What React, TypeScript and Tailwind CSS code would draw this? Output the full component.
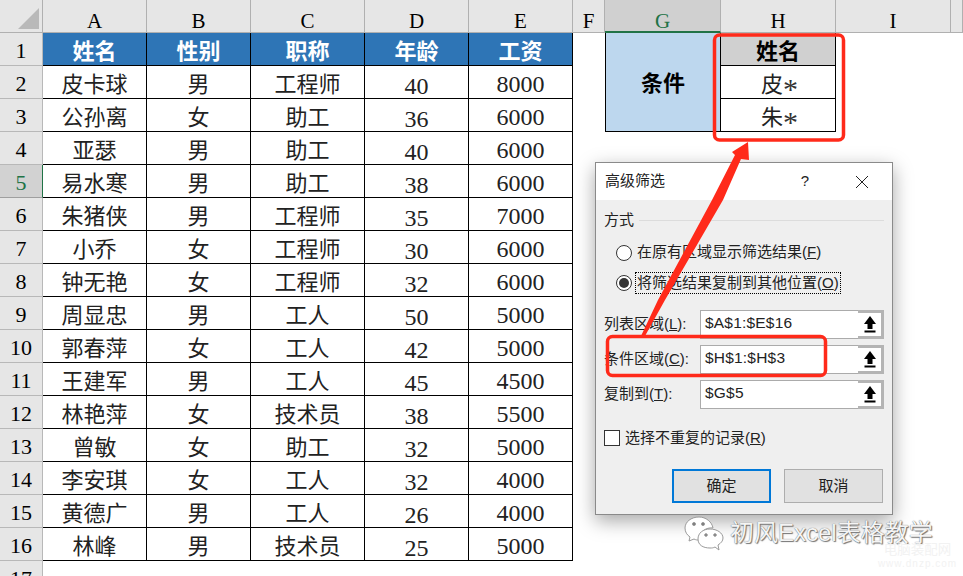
const rows = [
  ["皮卡球", "男", "工程师", "40", "8000"],
  ["公孙离", "女", "助工", "36", "6000"],
  ["亚瑟", "男", "助工", "40", "6000"],
  ["易水寒", "男", "助工", "38", "6000"],
  ["朱猪侠", "男", "工程师", "35", "7000"],
  ["小乔", "女", "工程师", "30", "6000"],
  ["钟无艳", "女", "工程师", "32", "6000"],
  ["周显忠", "男", "工人", "50", "5000"],
  ["郭春萍", "女", "工人", "42", "5000"],
  ["王建军", "男", "工人", "45", "4500"],
  ["林艳萍", "女", "技术员", "38", "5500"],
  ["曾敏", "女", "助工", "32", "5000"],
  ["李安琪", "女", "工人", "32", "4000"],
  ["黄德广", "男", "工人", "26", "4000"],
  ["林峰", "男", "技术员", "25", "5000"],
];

const headers = ["姓名", "性别", "职称", "年龄", "工资"];
const columns = ["A", "B", "C", "D", "E", "F", "G", "H", "I", ""];

const RowHead = ({ n }: { n: number }) => (
  <div
    className={`flex items-center justify-center border-b border-r pt-[3px] text-[22px] ${
      n === 5
        ? "border-b-[#9f9f9f] border-r-[#217346] bg-[#d2d2d2] text-[#217346]"
        : "border-b-[#b8b8b8] border-r-[#b8b8b8] bg-[#e6e6e6] text-black"
    }`}
  >
    {n}
  </div>
);

const Cell = ({ children, pad }: { children: React.ReactNode; pad: string }) => (
  <div className={`flex items-center justify-center border-b border-r border-black bg-white leading-none text-[#222] ${pad}`}>
    {children}
  </div>
);

const Star = () => (
  <span className="inline-block h-[22px] w-[12px] text-center text-[30px] leading-[30px] text-[#333]">*</span>
);

const RefButton = () => (
  <div className="flex w-[26px] items-center justify-center border-[3px] border-l-0 border-[#b4b4b4] bg-white">
    <svg width="14" height="18" viewBox="0 0 14 18">
      <path d="M7 1 L13 9 H9.5 V14 H4.5 V9 H1 Z" fill="#000" />
      <rect x="1.5" y="15.5" width="11" height="2" fill="#000" />
    </svg>
  </div>
);

const RangeField = ({ label, hot, value }: { label: string; hot: string; value: string }) => (
  <div className="flex h-[29px] items-center">
    <div className="w-[96px] text-[15px] text-[#222]">
      {label}(<span className="underline">{hot}</span>):
    </div>
    <div className="flex h-full w-[184px]">
      <div className="flex-1 border border-r-0 border-[#ababab] bg-white pb-1 pl-[4px] text-[15.5px] tracking-[0.2px] text-[#222]">
        {value}
      </div>
      <RefButton />
    </div>
  </div>
);

const FilterDialog = () => (
  <div className="absolute left-[595px] top-[162px] flex h-[353px] w-[298px] flex-col border border-[#8a8a8a] bg-[#efefef] shadow-[0_6px_18px_rgba(0,0,0,0.35)] font-['Liberation_Sans','Noto_Sans_CJK_SC',sans-serif]">
    <div className="flex h-[37px] items-center bg-white pl-[9px] pr-[23px] text-[15px] text-[#222]">
      <span>高级筛选</span>
      <span className="ml-auto mr-[46px] text-[15px]">?</span>
      <svg width="14" height="14" viewBox="0 0 14 14">
        <path d="M1 1 L13 13 M13 1 L1 13" stroke="#222" strokeWidth="1" fill="none" />
      </svg>
    </div>
    <div className="flex flex-1 flex-col px-[8px]">
      <div className="mt-[9px] flex items-center gap-[5px] text-[15px] text-[#222]">
        <span>方式</span>
        <div className="h-px flex-1 bg-[#dcdcdc]" />
      </div>
      <div className="ml-[12px] mt-[6px] flex h-[30px] items-center gap-[5px] text-[15px] text-[#222]">
        <div className="h-4 w-4 rounded-full border border-[#333] bg-white" />
        <span>
          在原有区域显示筛选结果(<span className="underline">F</span>)
        </span>
      </div>
      <div className="ml-[12px] flex h-[30px] items-center gap-[3px] text-[15px] text-[#222]">
        <div className="flex h-4 w-4 items-center justify-center rounded-full border border-[#333] bg-white">
          <div className="h-[10px] w-[10px] rounded-full bg-[#333]" />
        </div>
        <span className="border border-dotted border-black px-px leading-[20px]">
          将筛选结果复制到其他位置(<span className="underline">O</span>)
        </span>
      </div>
      <div className="mt-[12px] flex flex-col gap-[6px]">
        <RangeField label="列表区域" hot="L" value="$A$1:$E$16" />
        <RangeField label="条件区域" hot="C" value="$H$1:$H$3" />
        <RangeField label="复制到" hot="T" value="$G$5" />
      </div>
      <div className="mt-[18px] flex items-center gap-[5px] text-[15px] text-[#222]">
        <div className="h-4 w-4 border border-[#333] bg-white" />
        <span>
          选择不重复的记录(<span className="underline">R</span>)
        </span>
      </div>
      <div className="mt-[20px] flex justify-end gap-[13px] pr-[1px] text-[15px] text-[#222]">
        <div className="flex h-[34px] w-[99px] items-center justify-center border-2 border-[#0078d7] bg-[#e1e1e1]">确定</div>
        <div className="flex h-[34px] w-[99px] items-center justify-center border border-[#adadad] bg-[#e1e1e1]">取消</div>
      </div>
    </div>
  </div>
);

const App = () => {
  return (
    <div className="relative h-[576px] w-[963px] overflow-hidden bg-white font-['Liberation_Serif','Noto_Sans_CJK_SC',serif]">
      <div className="h-[4px] bg-[#f0f0f0]" />
      <div className="-mt-[4px] grid grid-cols-[43px_104px_104px_114px_104px_104px_32px_116px_115px_115px_12px] grid-rows-[repeat(18,33px)]">
        {/* column letters */}
        <div className="flex items-end justify-end border-b border-r border-[#b0b0b0] bg-[#e6e6e6] pb-[3px] pr-[3px]">
          <svg width="21" height="21" viewBox="0 0 21 21">
            <path d="M21 0 V21 H0 Z" fill="#b9b9b9" />
          </svg>
        </div>
        {columns.map((c) => (
          <div
            key={c}
            className={`flex items-center justify-center pt-[11px] text-[21px] leading-none ${
              c === "G"
                ? "border-b-2 border-r border-b-[#217346] border-r-[#b0b0b0] bg-[#d0d0d0] text-[#217346]"
                : "border-b border-r border-[#b0b0b0] bg-[#e6e6e6] text-black"
            }`}
          >
            {c}
          </div>
        ))}

        {/* row 1 */}
        <RowHead n={1} />
        {headers.map((h) => (
          <div
            key={h}
            className="flex items-center justify-center border-b border-r border-black bg-[#2e75b6] pt-[6px] text-[22px] font-bold leading-none text-white"
          >
            {h}
          </div>
        ))}
        <div />
        <div className="row-span-3 flex items-center justify-center border border-t-0 border-black bg-[#bdd7ee] pt-[2px] text-[22px] font-bold text-black">
          条件
        </div>
        <div className="flex items-center justify-center border-b border-r border-black bg-[#d0d0d0] pt-[5px] text-[22px] font-bold leading-none text-black">
          姓名
        </div>
        <div />
        <div />

        {/* data rows */}
        {rows.map((r, i) => (
          <div key={i} className="contents">
            <RowHead n={i + 2} />
            {r.map((v, j) => (
              <Cell key={j} pad={j === 4 ? "pt-[4px] text-[24px]" : j === 3 ? "pt-[7px] text-[24px]" : "pt-[6px] text-[22px]"}>
                {v}
              </Cell>
            ))}
            <div />
            {i < 2 && (
              <Cell pad="pt-[6px] text-[22px]">
                {i === 0 ? "皮" : "朱"}
                <Star />
              </Cell>
            )}
            {i >= 2 && <div />}
            {i >= 2 && <div />}
            <div />
            <div />
          </div>
        ))}

        <RowHead n={17} />
      </div>

      <FilterDialog />

      {/* red annotation */}
      <svg className="absolute left-0 top-0" width="963" height="576" viewBox="0 0 963 576" fill="none">
        <rect x="714.5" y="35" width="129" height="105" rx="5" stroke="#ff2a1a" strokeWidth="3.5" />
        <rect x="607.5" y="336.5" width="218" height="39" rx="5" stroke="#ff2a1a" strokeWidth="3.5" />
        <path d="M748 142 L749 160 L741 159 L723 200 L665 300 L645 336 L641 336 L658 300 L712 200 L735 155 L732 152 Z" fill="#ff2a1a" />
      </svg>

      {/* watermark */}
      <div className="absolute left-[684px] top-[515px] flex items-center gap-[6px]">
        <svg width="40" height="36" viewBox="0 0 40 36" fill="none" stroke="#9a9a9a" strokeWidth="1">
          <path d="M15 2 C7 2 1 7 1 13 C1 17 3 20 6 22 L5 26 L10 24 C12 25 13 25 15 25 C15 17 22 12 29 13 C28 7 22 2 15 2 Z" fill="#fff" />
          <path d="M26 14 C19 14 14 18 14 24 C14 30 19 33 26 33 C28 33 29 33 31 32 L35 35 L34 30 C37 28 39 26 39 23 C39 18 33 14 26 14 Z" fill="#fff" />
          <circle cx="10" cy="9" r="1.5" fill="#777" />
          <circle cx="19" cy="9" r="1.5" fill="#777" />
          <circle cx="22" cy="20" r="1.3" fill="#777" />
          <circle cx="31" cy="20" r="1.3" fill="#777" />
        </svg>
        <span className="text-[24px] leading-[20px] text-[#f4f4f4] font-['Liberation_Sans','Noto_Sans_CJK_SC',sans-serif] [text-shadow:0_0_1px_#555,1px_1px_1px_#777]">
          初风Excel表格教学
        </span>
      </div>
      <div className="absolute left-[883px] top-[543px] flex w-[69px] flex-col items-center font-['Liberation_Sans','Noto_Sans_CJK_SC',sans-serif] leading-none text-[#f2f2f2]">
        <span className="text-[13.5px]">电脑装配网</span>
        <span className="mt-[2px] text-[10px] tracking-[1px]">www.dnzp.com</span>
      </div>
    </div>
  );
};

export default App;
